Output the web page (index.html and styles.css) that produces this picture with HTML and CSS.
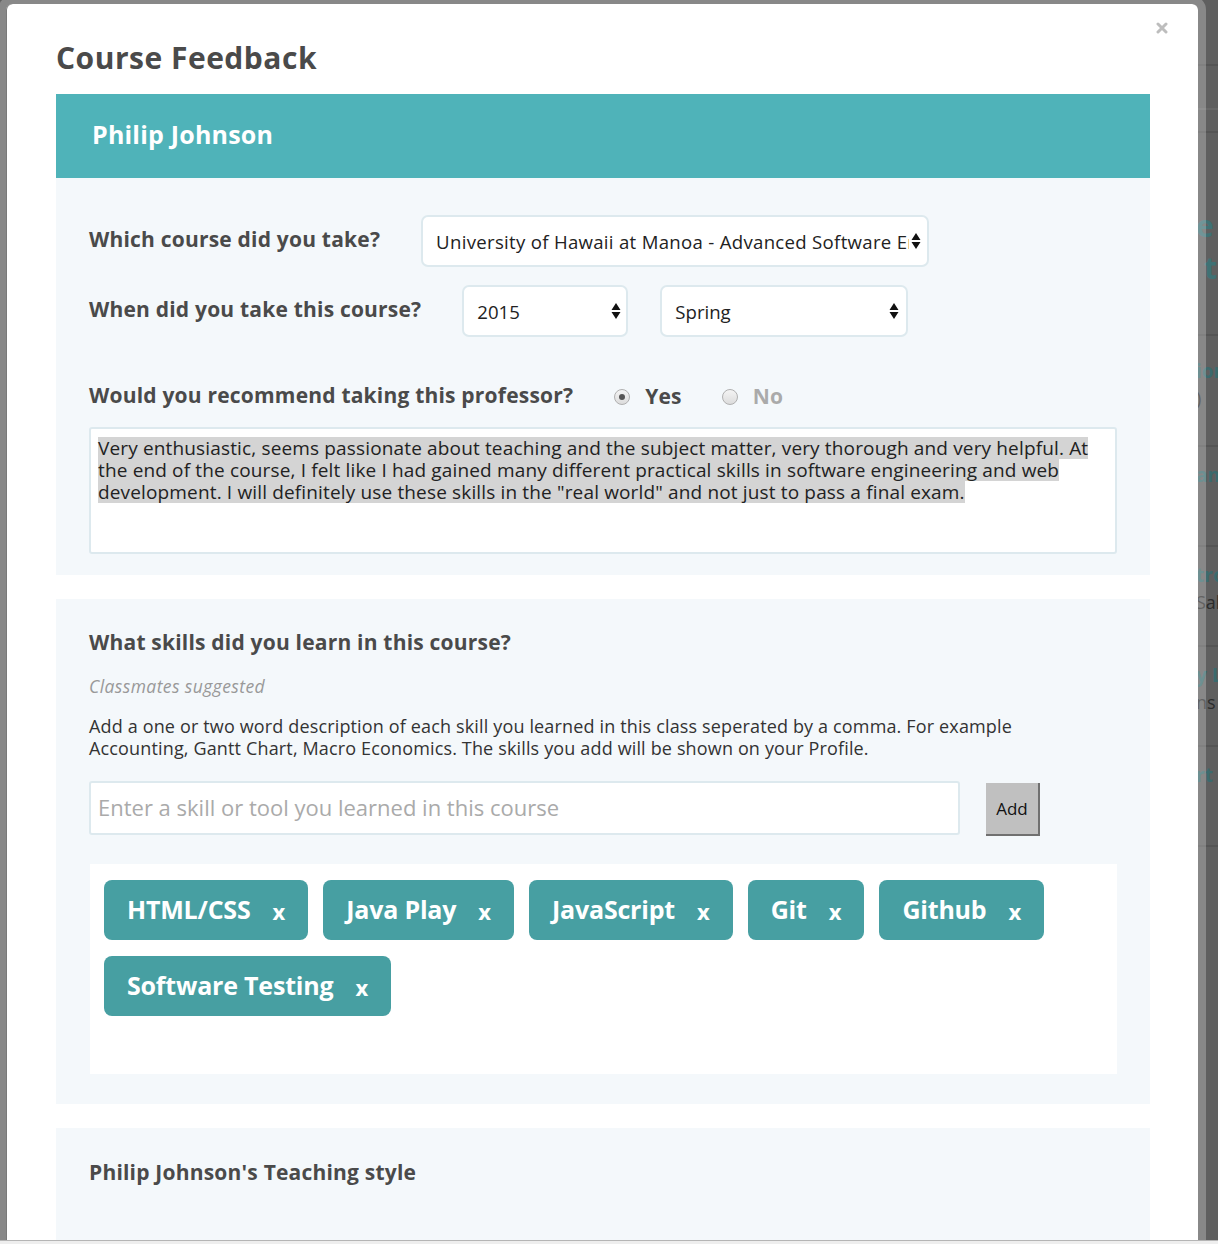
FILE: index.html
```html
<!DOCTYPE html>
<html>
<head>
<meta charset="utf-8">
<link rel="stylesheet" href="styles.css">
</head>
<body>
<div class="page">
  <div class="page-col">
    <div class="pg-row pg-top"></div>
    <div class="pg-row pg-thin"></div>
    <div class="pg-row pg-thin2"></div>
    <div class="pg-row pg-hero"><span class="pg-big">e</span><span class="pg-big pg-big2">t</span></div>
    <div class="pg-row pg-item pg-first"><span class="pg-t">ion</span><span class="pg-s">)</span></div>
    <div class="pg-row pg-item"><span class="pg-t">an</span></div>
    <div class="pg-row pg-item"><span class="pg-t">tro</span><span class="pg-s">Sale</span></div>
    <div class="pg-row pg-item"><span class="pg-t">y L</span><span class="pg-s">ns</span></div>
    <div class="pg-row pg-item"><span class="pg-t">rt S</span></div>
  </div>
</div>

<div class="modal">
  <button class="close" aria-label="Close">
    <svg width="12" height="12" viewBox="0 0 12 12"><path d="M2 2 L10 10 M10 2 L2 10" stroke="#bdbdbd" stroke-width="3" stroke-linecap="round"/></svg>
  </button>
  <h1 class="title">Course Feedback</h1>

  <div class="prof-head">Philip Johnson</div>

  <section class="panel panel-course">
    <div class="row">
      <label class="label">Which course did you take?</label>
      <div class="select select-course">
        <span class="select-text">University of Hawaii at Manoa - Advanced Software Engineering</span>
        <svg class="arrows" width="10" height="20" viewBox="0 0 10 20"><path d="M5 2 L9.5 9 L0.5 9 Z M0.5 11 L9.5 11 L5 18 Z" fill="#111"/></svg>
      </div>
    </div>
    <div class="row row-when">
      <label class="label">When did you take this course?</label>
      <div class="select select-year">
        <span class="select-text">2015</span>
        <svg class="arrows" width="10" height="20" viewBox="0 0 10 20"><path d="M5 2 L9.5 9 L0.5 9 Z M0.5 11 L9.5 11 L5 18 Z" fill="#111"/></svg>
      </div>
      <div class="select select-term">
        <span class="select-text">Spring</span>
        <svg class="arrows" width="10" height="20" viewBox="0 0 10 20"><path d="M5 2 L9.5 9 L0.5 9 Z M0.5 11 L9.5 11 L5 18 Z" fill="#111"/></svg>
      </div>
    </div>
    <div class="row row-rec">
      <label class="label">Would you recommend taking this professor?</label>
      <span class="radio radio-on"></span><span class="radio-label">Yes</span>
      <span class="radio"></span><span class="radio-label radio-label-off">No</span>
    </div>
    <div class="textarea">
      <div class="sel">Very enthusiastic, seems passionate about teaching and the subject matter, very thorough and very helpful. At </div>
      <div class="sel">the end of the course, I felt like I had gained many different practical skills in software engineering and web </div>
      <div class="sel">development. I will definitely use these skills in the "real world" and not just to pass a final exam.</div>
    </div>
  </section>

  <section class="panel panel-skills">
    <h2 class="heading">What skills did you learn in this course?</h2>
    <p class="hint">Classmates suggested</p>
    <p class="desc">Add a one or two word description of each skill you learned in this class seperated by a comma. For example<br>Accounting, Gantt Chart, Macro Economics. The skills you add will be shown on your Profile.</p>
    <div class="add-row">
      <div class="skill-input">Enter a skill or tool you learned in this course</div>
      <button class="add-btn">Add</button>
    </div>
    <div class="tag-box">
      <span class="tag">HTML/CSS<span class="tag-x">x</span></span>
      <span class="tag">Java Play<span class="tag-x">x</span></span>
      <span class="tag">JavaScript<span class="tag-x">x</span></span>
      <span class="tag">Git<span class="tag-x">x</span></span>
      <span class="tag">Github<span class="tag-x">x</span></span>
      <span class="tag">Software Testing<span class="tag-x">x</span></span>
    </div>
  </section>

  <section class="panel panel-style">
    <h2 class="heading">Philip Johnson's Teaching style</h2>
  </section>
</div>

<div class="bottom-strip"></div>
</body>
</html>
```

FILE: styles.css
```css
* { box-sizing: border-box; }

html, body {
  margin: 0;
  height: 1244px;
  overflow: hidden;
}

body {
  background: #5f5f5f;
  font-family: "Open Sans", "Lato", sans-serif;
  color: #4a4a4a;
  position: relative;
}

/* dimmed page behind the modal */
.page {
  display: flex;
  justify-content: flex-end;
  height: 100%;
}
.page-col {
  width: 22px;
  display: flex;
  flex-direction: column;
}
.pg-row {
  border-bottom: 2px solid #555;
  display: flex;
  flex-direction: column;
  overflow: hidden;
  white-space: nowrap;
  flex: none;
}
.pg-top { height: 66px; }
.pg-thin { height: 44px; border-bottom-color: #686868; }
.pg-thin2 { height: 23px; }
.pg-hero { height: 203px; padding-top: 72px; }
.pg-big { font-size: 30px; font-weight: 700; color: #3f7174; line-height: 42px; }
.pg-big2 { margin-left: 8px; }
.pg-item { height: 100px; padding-top: 15px; }
.pg-first { height: 111px; padding-top: 22px; }
.pg-t { font-size: 19px; font-weight: 700; color: #3b6a6d; line-height: 27px; }
.pg-s { font-size: 18px; color: #2c2c2c; line-height: 27px; }

/* modal */
.modal {
  position: absolute;
  left: -2px;
  top: -4px;
  width: 1208px;
  height: 1300px;
  border: 8px solid rgba(255, 255, 255, 0.26);
  background-clip: padding-box;
  border-radius: 14px;
  background-color: #fff;
  padding: 0 48px 0 50px;
}
.modal::before {
  content: "";
  position: absolute;
  inset: 0;
  border-radius: 6px;
  box-shadow: inset 1px 0 0 #7a7a7a;
  pointer-events: none;
}

.close {
  position: absolute;
  right: 28px;
  top: 16px;
  border: 0;
  background: none;
  padding: 0;
  width: 16px;
  height: 16px;
  display: flex;
  align-items: center;
  justify-content: center;
}

.title {
  margin: 0;
  padding-top: 34px;
  height: 90px;
  font-size: 30px;
  font-weight: 700;
  color: #4a4a4a;
  line-height: 40px;
  letter-spacing: 0.5px;
}

.prof-head {
  height: 84px;
  background: #4fb3b9;
  color: #fff;
  font-size: 25px;
  font-weight: 700;
  padding-left: 36px;
  display: flex;
  align-items: center;
  letter-spacing: 0.2px;
  padding-bottom: 4px;
}

.panel {
  background: #f4f8fb;
  padding: 0 33px;
}

.panel-course {
  padding-top: 37px;
  padding-bottom: 21px;
}

.row {
  display: flex;
  align-items: center;
}
.row-when { margin-top: 18px; }
.row-rec { margin-top: 42px; height: 36px; }

.label {
  font-size: 21px;
  font-weight: 700;
  color: #4a4a4a;
  margin-right: 41px;
  padding-bottom: 5px;
  letter-spacing: 0.2px;
}

.select {
  height: 52px;
  background: #fff;
  border: 2px solid #dde9ee;
  border-radius: 7px;
  display: flex;
  align-items: center;
  padding: 0 6px 0 13px;
  font-size: 18.6px;
  color: #222;
}
.select-text {
  flex: 1;
  white-space: nowrap;
  overflow: hidden;
}
.arrows { flex: none; margin-left: 2px; }
.select-course { width: 508px; letter-spacing: 0.3px; }
.select-year { width: 166px; padding-right: 5px; }
.select-term { width: 248px; margin-left: 32px; padding-right: 7px; }

.radio {
  width: 16px;
  height: 16px;
  border-radius: 50%;
  border: 1px solid #b0b0b0;
  background: linear-gradient(#f4f4f4, #dcdcdc);
  display: inline-flex;
  align-items: center;
  justify-content: center;
}
.radio-on::after {
  content: "";
  width: 6px;
  height: 6px;
  border-radius: 50%;
  background: #555;
}
.radio-label {
  font-size: 21px;
  font-weight: 700;
  color: #4a4a4a;
  margin-left: 15px;
  margin-right: 40px;
  padding-bottom: 2px;
  letter-spacing: 0.2px;
}
.radio-label-off { color: #aaa; }

.textarea {
  margin-top: 12px;
  height: 127px;
  background: #fff;
  border: 2px solid #dde9ee;
  border-radius: 3px;
  padding: 8px 7px;
  font-size: 19px;
  color: #222;
  white-space: nowrap;
  letter-spacing: 0.15px;
}
.sel {
  background: #d4d4d4;
  width: fit-content;
  height: 22px;
  line-height: 22px;
}

.panel-skills {
  margin-top: 24px;
  padding-top: 28px;
  padding-bottom: 30px;
}

.heading {
  margin: 0;
  font-size: 21px;
  font-weight: 700;
  color: #4a4a4a;
  line-height: 30px;
  letter-spacing: 0.2px;
}

.hint {
  margin: 19px 0 0;
  font-size: 17.5px;
  font-style: italic;
  color: #999;
  line-height: 20px;
  letter-spacing: 0.4px;
}

.desc {
  margin: 19px 0 0;
  font-size: 18px;
  line-height: 22px;
  color: #333;
  letter-spacing: 0.15px;
  white-space: nowrap;
}

.add-row {
  display: flex;
  align-items: flex-start;
  margin-top: 22px;
}
.skill-input {
  width: 871px;
  height: 54px;
  background: #fff;
  border: 2px solid #dde9ee;
  border-radius: 3px;
  padding: 0 7px;
  display: flex;
  align-items: center;
  font-size: 22px;
  color: #aaa;
  padding-bottom: 2px;
}
.add-btn {
  margin-left: 26px;
  margin-top: 2px;
  width: 54px;
  height: 53px;
  background: #c0c0c0;
  border: 0;
  border-right: 2px solid #707070;
  border-bottom: 2px solid #707070;
  border-radius: 0;
  font-family: inherit;
  font-size: 17px;
  color: #111;
  padding: 0;
}

.tag-box {
  margin-top: 28px;
  height: 210px;
  background: #fff;
  padding: 16px 14px;
  display: flex;
  flex-wrap: wrap;
  align-content: flex-start;
  gap: 16px 15px;
  margin-left: 1px;
}
.tag {
  height: 60px;
  background: #479fa2;
  border-radius: 8px;
  color: #fff;
  font-size: 25px;
  font-weight: 700;
  letter-spacing: -0.2px;
  display: inline-flex;
  align-items: center;
  padding: 0 23px 2px 23px;
}
.tag-x {
  margin-left: 22px;
  font-size: 22px;
  font-weight: 700;
  padding-top: 4px;
  letter-spacing: 0;
}

.panel-style {
  margin-top: 24px;
  padding-top: 29px;
  height: 200px;
}

.bottom-strip {
  position: absolute;
  left: 0;
  right: 0;
  bottom: 0;
  height: 4px;
  background: #eeeeee;
  border-top: 1px solid #b5b5b5;
}
```
